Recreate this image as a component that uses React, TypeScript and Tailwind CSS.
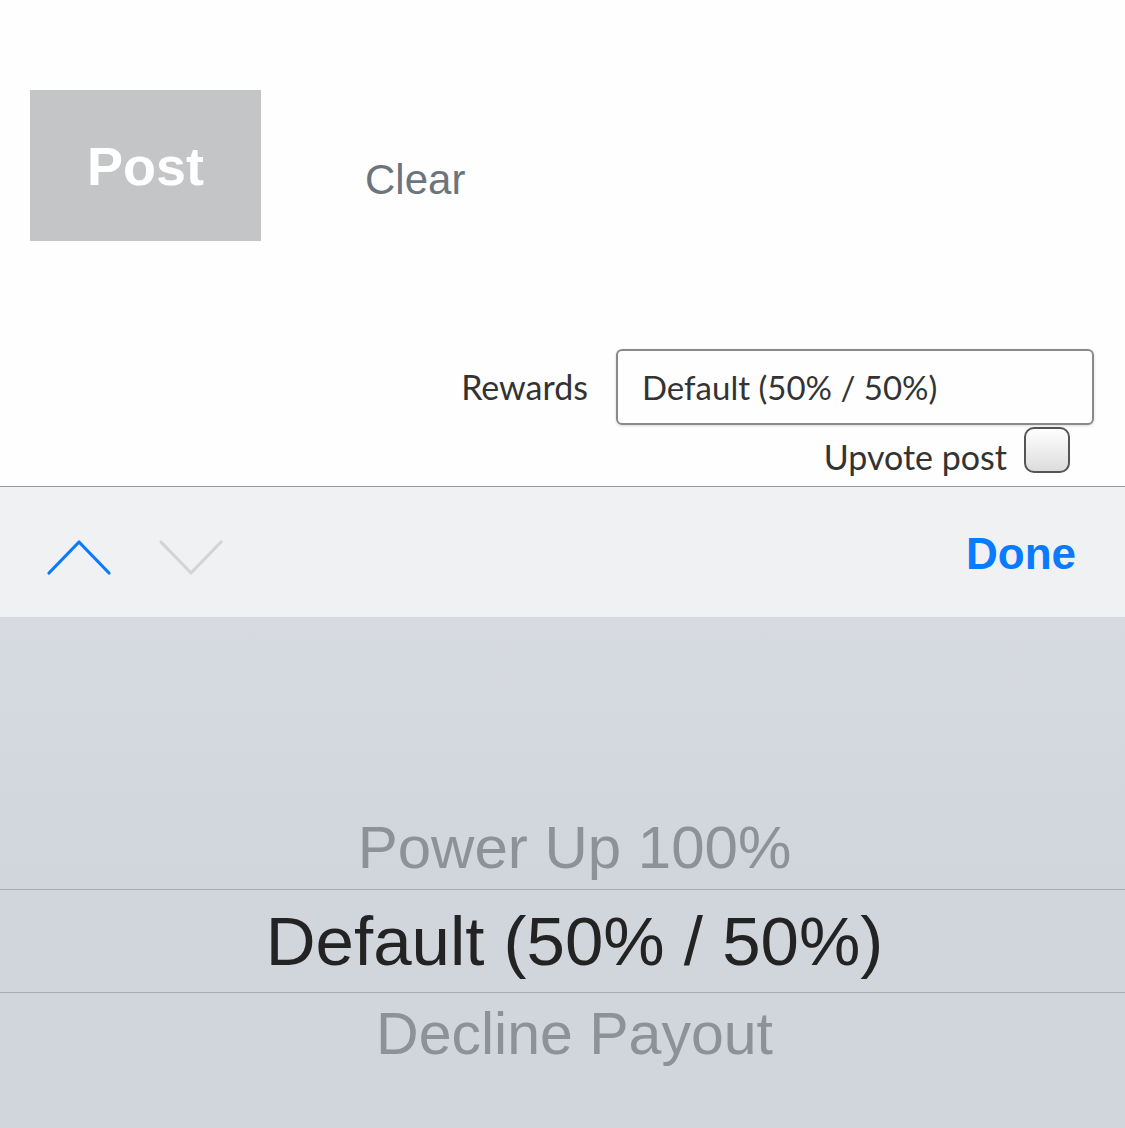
const PICKER = [
  { label: "Power Up 100%", cls: "pt-[22px] text-[60px] text-[#8e9196]" },
  { label: "Default (50% / 50%)", cls: "border-y border-[#a7aab0] text-[69px] text-[#232323]" },
  { label: "Decline Payout", cls: "pb-[22px] text-[59px] text-[#8e9196]" },
];

function Chevron({ up, color }: { up: boolean; color: string }) {
  return (
    <svg width="66" height="40" viewBox="0 0 66 40" fill="none">
      <path
        d={up ? "M3 35 L33 4 L63 35" : "M3 4 L33 35 L63 4"}
        stroke={color}
        strokeWidth="3.2"
        strokeLinecap="round"
        strokeLinejoin="round"
      />
    </svg>
  );
}

export default function App() {
  return (
    <div className="w-[1125px] h-[1128px] bg-[#fefefe] flex flex-col overflow-hidden font-['Liberation_Sans',Arial,sans-serif]">
      {/* post / clear */}
      <div className="flex items-start pt-[90px] pl-[30px]">
        <div className="w-[231px] h-[151px] bg-[#c4c5c7] flex items-center justify-center">
          <span className="text-[54px] font-bold text-white leading-none">Post</span>
        </div>
        <span className="ml-[104px] mt-[66px] text-[42px] leading-[48px] text-[#6c757d]">Clear</span>
      </div>

      {/* rewards */}
      <div className="mt-[108px] flex items-center justify-end pr-[31px] font-['Lato',sans-serif] text-[34px] text-[#333]">
        <span className="mr-[28px] leading-none">Rewards</span>
        <div className="w-[478px] h-[76px] border-2 border-[#8a8a8a] rounded-[6px] flex items-center pl-[24px] text-[33px] leading-none shadow-[0_1px_3px_rgba(0,0,0,0.15)]">
          Default (50% / 50%)
        </div>
      </div>
      <div className="mt-[2px] flex items-start justify-end pr-[55px] font-['Lato',sans-serif] text-[34px] text-[#333]">
        <span className="mr-[17px] mt-[13px] leading-[34px]">Upvote post</span>
        <div className="w-[46px] h-[46px] rounded-[10px] border-2 border-[#555] bg-gradient-to-b from-white to-[#dcdcdc]" />
      </div>

      {/* keyboard toolbar */}
      <div className="mt-[12px] h-[131px] border-t border-[#9c9c9c] bg-[#f0f1f3] flex items-center pl-[46px] pr-[49px]">
        <div className="flex items-center gap-[46px] mt-[12px]">
          <Chevron up color="#0a7aff" />
          <Chevron up={false} color="#d3d4d6" />
        </div>
        <span className="ml-auto mt-[4px] text-[44px] font-bold text-[#0a7aff]">Done</span>
      </div>

      {/* picker wheel */}
      <div className="flex-1 bg-gradient-to-b from-[#d7dae1] via-[#d1d5dc] to-[#d1d5dc] pt-[168px] flex flex-col">
        {PICKER.map((p) => (
          <div key={p.label} className={`h-[104px] flex items-center justify-center pl-[24px] leading-none ${p.cls}`}>
            {p.label}
          </div>
        ))}
      </div>
    </div>
  );
}
